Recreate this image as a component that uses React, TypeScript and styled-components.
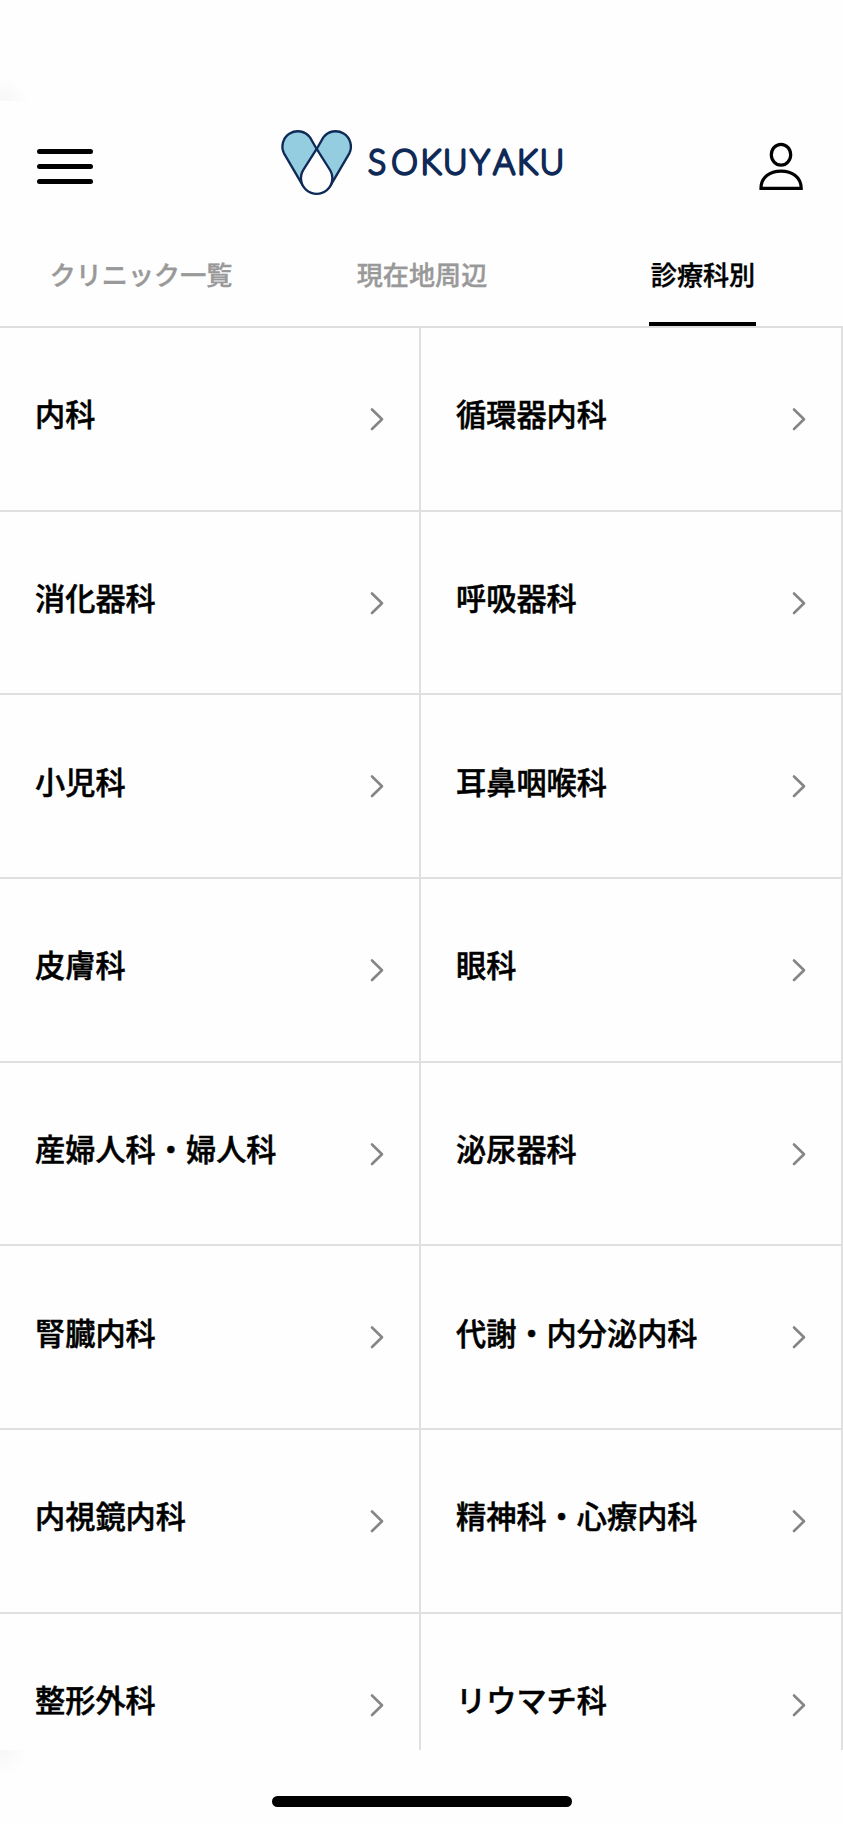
import React from "react";
import styled, { createGlobalStyle } from "styled-components";

const GlobalStyle = createGlobalStyle`
  * { box-sizing: border-box; }
  html, body { margin: 0; padding: 0; background: #fefefe; }
  body { font-family: "Noto Sans CJK JP", "Noto Sans", sans-serif; color: #000; }
  button { font: inherit; color: inherit; background: none; border: 0; padding: 0; }
`;

const Screen = styled.div`
  width: 843px;
  height: 1824px;
  display: flex;
  flex-direction: column;
  overflow: hidden;
  background: #fefefe;
`;

const StatusArea = styled.div`
  flex: none;
  height: 101px;
  background: radial-gradient(ellipse 30px 24px at 0 100%, #f7f7f7, #fefefe);
`;

const Header = styled.header`
  flex: none;
  height: 121px;
  padding: 0 38px 0 37px;
  display: flex;
  align-items: flex-start;
`;

const MenuButton = styled.button`
  width: 56px;
  margin-top: 47.5px;
  display: flex;
  flex-direction: column;
  gap: 9.7px;
`;

const MenuBar = styled.span`
  height: 5.5px;
  border-radius: 3px;
  background: #000;
`;

const Logo = styled.svg`
  display: block;
  width: 320px;
  height: 100px;
  margin: 9px 0 0 167px;
`;

const LogoText = styled.text`
  font-family: Lato, sans-serif;
  font-size: 33.2px;
  font-weight: 100;
  fill: #0f2a57;
  stroke: #0f2a57;
  stroke-width: 3.5px;
  stroke-linejoin: round;
  text-anchor: middle;
`;

const UserIcon = styled.svg`
  display: block;
  width: 46px;
  height: 50px;
  margin: 41px 0 0 auto;
`;

const Tabs = styled.nav`
  flex: none;
  height: 106px;
  display: grid;
  grid-template-columns: repeat(3, 1fr);
  justify-items: center;
  border-bottom: 2px solid #dedede;
`;

const Tab = styled.button<{ $active?: boolean }>`
  height: 104px;
  padding: 32px 1px 0 2px;
  display: flex;
  align-items: flex-start;
  font-size: 26.1px;
  line-height: 40px;
  font-weight: 500;
  white-space: nowrap;
  color: ${(p) => (p.$active ? "#000" : "#999")};
  -webkit-text-stroke: 0.4px;
  border-bottom: 4px solid ${(p) => (p.$active ? "#000" : "transparent")};
`;

const List = styled.main`
  flex: none;
  height: 1422px;
  overflow: hidden;
  display: grid;
  grid-template-columns: 421px 422px;
  grid-auto-rows: 183.7px;
`;

const Item = styled.a`
  display: flex;
  align-items: center;
  justify-content: space-between;
  padding: 0 35px;
  border-right: 2px solid #e0e0e0;
  border-bottom: 2px solid #e0e0e0;
`;

const ItemName = styled.span`
  font-size: 30.2px;
  line-height: 44px;
  font-weight: 500;
  -webkit-text-stroke: 0.5px;
  padding-bottom: 11px;
  white-space: nowrap;
`;

const Chevron = styled.svg`
  width: 14px;
  height: 24px;
  flex: none;
`;

const Footer = styled.footer`
  flex: 1;
  padding-top: 46px;
  display: flex;
  justify-content: center;
  background: radial-gradient(ellipse 28px 26px at 0 0, #f7f7f7, #fefefe);
`;

const HomeBar = styled.div`
  width: 300px;
  height: 11px;
  border-radius: 6px;
  background: #000;
`;

const departments = [
  "内科", "循環器内科",
  "消化器科", "呼吸器科",
  "小児科", "耳鼻咽喉科",
  "皮膚科", "眼科",
  "産婦人科・婦人科", "泌尿器科",
  "腎臓内科", "代謝・内分泌内科",
  "内視鏡内科", "精神科・心療内科",
  "整形外科", "リウマチ科",
];

export default function App() {
  return (
    <>
      <GlobalStyle />
      <Screen>
        <StatusArea />
        <Header>
          <MenuButton aria-label="メニュー">
            <MenuBar />
            <MenuBar />
            <MenuBar />
          </MenuButton>
          <Logo viewBox="0 0 320 100">
            <g transform="scale(.33333)" stroke="#0f2a57" strokeWidth="7" strokeLinejoin="round">
              <path fill="#94cddf" d="M170 117 L150 82 A46 46 0 0 0 72 130 L130 229 Z" />
              <path fill="#94cddf" d="M170 117 L190 82 A46 46 0 0 1 268 130 L210 229 Z" />
              <path fill="#fefefe" d="M170 117 L130 180 A47 47 0 1 0 210 180 Z" />
            </g>
            <LogoText y="64" x="117 144.5 171 195.3 220 244 267.3 292">SOKUYAKU</LogoText>
          </Logo>
          <UserIcon viewBox="0 0 46 50" fill="none" stroke="#000" strokeWidth="3.2">
            <ellipse cx="22" cy="12.7" rx="9.7" ry="10.4" />
            <path d="M2 46.3 C2 35 11 29.1 22 29.1 S42.2 35 42.2 46.3 Z" />
          </UserIcon>
        </Header>
        <Tabs>
          <Tab>クリニック一覧</Tab>
          <Tab>現在地周辺</Tab>
          <Tab $active>診療科別</Tab>
        </Tabs>
        <List>
          {departments.map((name) => (
            <Item key={name}>
              <ItemName>{name}</ItemName>
              <Chevron viewBox="0 0 14 24" fill="none" stroke="#858585" strokeWidth="2.6" strokeLinecap="round" strokeLinejoin="round">
                <path d="M2 2.5 L12 12.3 L2 22" />
              </Chevron>
            </Item>
          ))}
        </List>
        <Footer>
          <HomeBar />
        </Footer>
      </Screen>
    </>
  );
}
